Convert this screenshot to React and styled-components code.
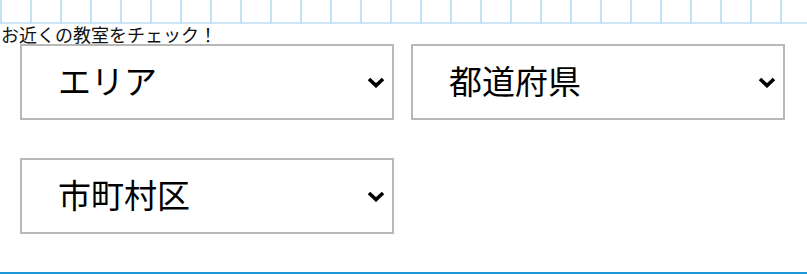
import React from "react";
import styled, { createGlobalStyle } from "styled-components";

const Global = createGlobalStyle`
  html, body { margin: 0; padding: 0; background: #fff; }
  body { font-family: "Noto Sans CJK JP", "Noto Sans", sans-serif; color: #111; }
`;

const Page = styled.div`
  width: 807px;
  height: 274px;
  overflow: hidden;
  display: flex;
  flex-direction: column;
`;

const GridStrip = styled.div`
  height: 24px;
  flex: none;
  background-image:
    linear-gradient(to right, #c2e3f3 0, #c2e3f3 2px, transparent 2px),
    linear-gradient(to bottom, transparent 22px, #cce8f6 22px, #cce8f6 24px);
  background-size: 30px 24px, 100% 24px;
  background-repeat: repeat-x, no-repeat;
`;

const Label = styled.div`
  font-size: 18px;
  line-height: 20px;
  height: 20px;
  padding-left: 1px;
  color: #111;
  white-space: nowrap;
`;

const Fields = styled.div`
  display: grid;
  grid-template-columns: 374px 374px;
  column-gap: 17px;
  row-gap: 38px;
  padding-left: 20px;
  padding-bottom: 38px;
`;

const Field = styled.div`
  position: relative;
  width: 100%;
  height: 76px;
`;

const Select = styled.select`
  appearance: none;
  -webkit-appearance: none;
  box-sizing: border-box;
  width: 100%;
  height: 76px;
  border: 2px solid #b8b8b8;
  border-radius: 0;
  background: #fff;
  color: #000;
  font-family: "Noto Sans CJK JP", "Noto Sans", sans-serif;
  font-size: 33px;
  padding: 0 40px 5px 36px;
  outline: none;
`;

const Chevron = styled.svg`
  position: absolute;
  right: 9px;
  top: 50%;
  margin-top: -5px;
  width: 18px;
  height: 11px;
  pointer-events: none;
`;

const Footer = styled.div`
  flex: none;
  border-top: 3px solid #1b98d5;
  height: 10px;
`;

const SelectField = ({ label }) => (
  <Field>
    <Select defaultValue="">
      <option value="">{label}</option>
    </Select>
    <Chevron viewBox="0 0 18 11">
      <polyline points="2,2 9,8.6 16,2" fill="none" stroke="#000" strokeWidth="3.6" />
    </Chevron>
  </Field>
);

export default function App() {
  return (
    <Page>
      <Global />
      <GridStrip />
      <Label>お近くの教室をチェック！</Label>
      <Fields>
        <SelectField label="エリア" />
        <SelectField label="都道府県" />
        <SelectField label="市町村区" />
      </Fields>
      <Footer />
    </Page>
  );
}
